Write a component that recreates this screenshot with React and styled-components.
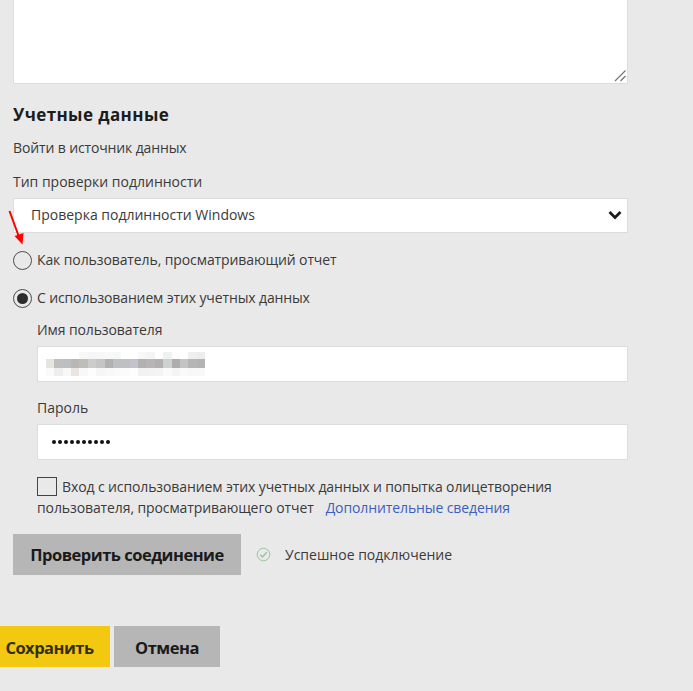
import React from "react";
import styled, { createGlobalStyle } from "styled-components";

const GlobalStyle = createGlobalStyle`
  * {
    box-sizing: border-box;
  }

  body {
    margin: 0;
    background: #e9e9e9;
    overflow: hidden;
  }
`;

const Page = styled.main`
  position: relative;
  width: 693px;
  height: 691px;
  overflow: hidden;
  background: #e9e9e9;
  color: #3a3a3a;
  font-family: "Open Sans", "Noto Sans", sans-serif;
  font-size: 14px;
`;

const Form = styled.form`
  display: flex;
  flex-direction: column;
  width: 615px;
  margin-left: 13px;
`;

const Description = styled.div`
  display: flex;
  justify-content: flex-end;
  align-items: flex-end;
  height: 84px;
  padding: 0 0 1px;
  background: #fff;
  border: 1px solid #dcdcdc;
  border-top: none;
`;

const Heading = styled.h2`
  margin: 19px 0 0;
  color: #1c1c1c;
  font-size: 17px;
  font-weight: 700;
  line-height: 24px;
  letter-spacing: 0.4px;
`;

const Text = styled.span`
  display: block;
  height: 20px;
  line-height: 20px;
  white-space: nowrap;
  margin-top: ${({ $top }) => $top || 0}px;
  letter-spacing: ${({ $spacing }) => $spacing || 0}px;
`;

const Field = styled.div`
  display: flex;
  align-items: center;
  height: ${({ $height }) => $height || 36}px;
  margin-top: ${({ $top }) => $top || 6}px;
  padding: 0 ${({ $right }) => $right || 8}px 0 ${({ $left }) => $left || 8}px;
  justify-content: space-between;
  background: #fff;
  border: 1px solid #dcdcdc;
`;

const SelectField = styled(Field)`
  padding-bottom: 2px;
`;

const Option = styled.label`
  display: flex;
  align-items: center;
  gap: 5px;
  height: 20px;
  margin-top: ${({ $top }) => $top}px;
`;

const Radio = styled.span`
  display: flex;
  align-items: center;
  justify-content: center;
  flex: none;
  width: 19px;
  height: 19px;
  border: 1.5px solid #4c4c4c;
  border-radius: 50%;

  &::after {
    content: "";
    width: 11px;
    height: 11px;
    border-radius: 50%;
    background: ${({ $checked }) => ($checked ? "#2c2c2c" : "transparent")};
  }
`;

const Credentials = styled.div`
  display: flex;
  flex-direction: column;
  margin-left: 24px;
`;

const Mosaic = styled.div`
  display: grid;
  grid-template-columns: repeat(19, 1fr);
  grid-template-rows: 7px 9px 8px;
  width: 159px;
`;

const Pixel = styled.i`
  background: ${({ $color }) => $color};
`;

const Dots = styled.div`
  display: flex;
  gap: 2px;
`;

const Dot = styled.i`
  width: 4px;
  height: 4px;
  border-radius: 50%;
  background: #111;
`;

const Impersonate = styled.div`
  display: flex;
  flex-direction: column;
  margin-top: 16px;
`;

const Line = styled.div`
  display: flex;
  align-items: center;
  height: 21px;
  gap: ${({ $gap }) => $gap}px;
`;

const Checkbox = styled.span`
  flex: none;
  width: 20px;
  height: 19px;
  border: 1.5px solid #444;
`;

const Link = styled(Text)`
  color: #3b5fc0;
`;

const Connection = styled.div`
  display: flex;
  align-items: center;
  margin-top: 16px;
`;

const Button = styled.button`
  flex: none;
  width: ${({ $width }) => $width}px;
  height: 41px;
  padding: ${({ $pad }) => $pad || "1px 0 0"};
  border: none;
  background: ${({ $primary }) => ($primary ? "#f2c811" : "#b6b6b6")};
  color: ${({ $primary }) => ($primary ? "#352f12" : "#1a1a1a")};
  font-family: inherit;
  font-size: 16.5px;
  font-weight: 700;
  line-height: 24px;
  white-space: nowrap;
  letter-spacing: -0.5px;
`;

const SuccessIcon = styled.svg`
  margin: 0 14px 0 15px;
`;

const Actions = styled.footer`
  display: flex;
  gap: 4px;
  margin-top: 51px;
`;

const Arrow = styled.svg`
  position: absolute;
  left: 5px;
  top: 207px;
`;

const pixels = [
  "#fff #fff #fff #fff #f8f8f8 #f6f6f6 #f7f7f7 #f8f8f8 #f7f7f7 #fff #fff #f8f8f8 #f5f5f5 #fff #eef1f0 #fdfdfd #fff #efefef #ededed",
  "#e6e6df #bfbfbf #bcbec2 #bab6b1 #bdbdb9 #cbcdcd #c5c5c7 #b2b1b0 #bebfc1 #bfc0c4 #c2c3cc #b1b1b1 #b9b4b6 #b2b0b0 #cbd2d1 #adadad #c6c3c6 #b5b5b5 #b3b3b3",
  "#fafafa #eeeeee #f8f8f8 #e8e5e2 #f8f8f8 #fdfdfd #f6f6f6 #f8f8f8 #fafafa #fbfbfb #fefefe #f2f2f2 #f4f2f2 #f4f4f4 #fafafa #f5f5f5 #fafafa #f8f8f8 #f8f8f8",
]
  .join(" ")
  .split(" ");

const App = () => {
  return (
    <>
      <GlobalStyle />
      <Page>
        <Form>
          <Description>
            <svg width="13" height="13" viewBox="0 0 13 13" stroke="#707070" strokeWidth="1.1">
              <path d="M1 12 11.500 1.500M6.500 12 11.500 7" />
            </svg>
          </Description>
          <Heading>Учетные данные</Heading>
          <Text $top={11} $spacing={-0.13}>Войти в источник данных</Text>
          <Text $top={14}>Тип проверки подлинности</Text>
          <SelectField $height={35} $top={6} $left={17} $right={5}>
            <Text>Проверка подлинности Windows</Text>
            <svg width="14" height="10" viewBox="0 0 14 10" fill="none" stroke="#1b1b1b" strokeWidth="2.7">
              <path d="M1.500 2 7 7.500 12.500 2" />
            </svg>
          </SelectField>
          <Option $top={17}>
            <Radio />
            <Text $spacing={-0.1}>Как пользователь, просматривающий отчет</Text>
          </Option>
          <Option $top={18}>
            <Radio $checked />
            <Text $spacing={-0.13}>С использованием этих учетных данных</Text>
          </Option>
          <Credentials>
            <Text $top={12} $spacing={-0.1}>Имя пользователя</Text>
            <Field>
              <Mosaic>
                {pixels.map((color, index) => (
                  <Pixel key={index} $color={color} />
                ))}
              </Mosaic>
            </Field>
            <Text $top={16}>Пароль</Text>
            <Field $left={14}>
              <Dots>
                {Array.from({ length: 10 }, (_, index) => (
                  <Dot key={index} />
                ))}
              </Dots>
            </Field>
            <Impersonate>
              <Line $gap={5}>
                <Checkbox />
                <Text $spacing={-0.11}>Вход с использованием этих учетных данных и попытка олицетворения</Text>
              </Line>
              <Line $gap={12}>
                <Text $spacing={-0.1}>пользователя, просматривающего отчет</Text>
                <Link $spacing={-0.11}>Дополнительные сведения</Link>
              </Line>
            </Impersonate>
          </Credentials>
          <Connection>
            <Button type="button" $width={228}>Проверить соединение</Button>
            <SuccessIcon width="15" height="15" viewBox="0 0 15 15" fill="none" stroke="#9cc5a2">
              <circle cx="7.500" cy="7.500" r="6.300" />
              <path d="M4.300 7.800 6.500 10 10.700 5.300" strokeWidth="1.500" />
            </SuccessIcon>
            <Text>Успешное подключение</Text>
          </Connection>
        </Form>
        <Actions>
          <Button type="button" $primary $width={110} $pad="2px 11px 0 0">Сохранить</Button>
          <Button type="button" $width={106} $pad="2px 0 0">Отмена</Button>
        </Actions>
        <Arrow width="22" height="40" viewBox="0 0 22 40">
          <path d="M4.500 4 14 30" stroke="#f00" strokeWidth="2" />
          <path d="M9.500 29 18.500 26 17.500 37.500Z" fill="#f00" />
        </Arrow>
      </Page>
    </>
  );
};

export default App;
